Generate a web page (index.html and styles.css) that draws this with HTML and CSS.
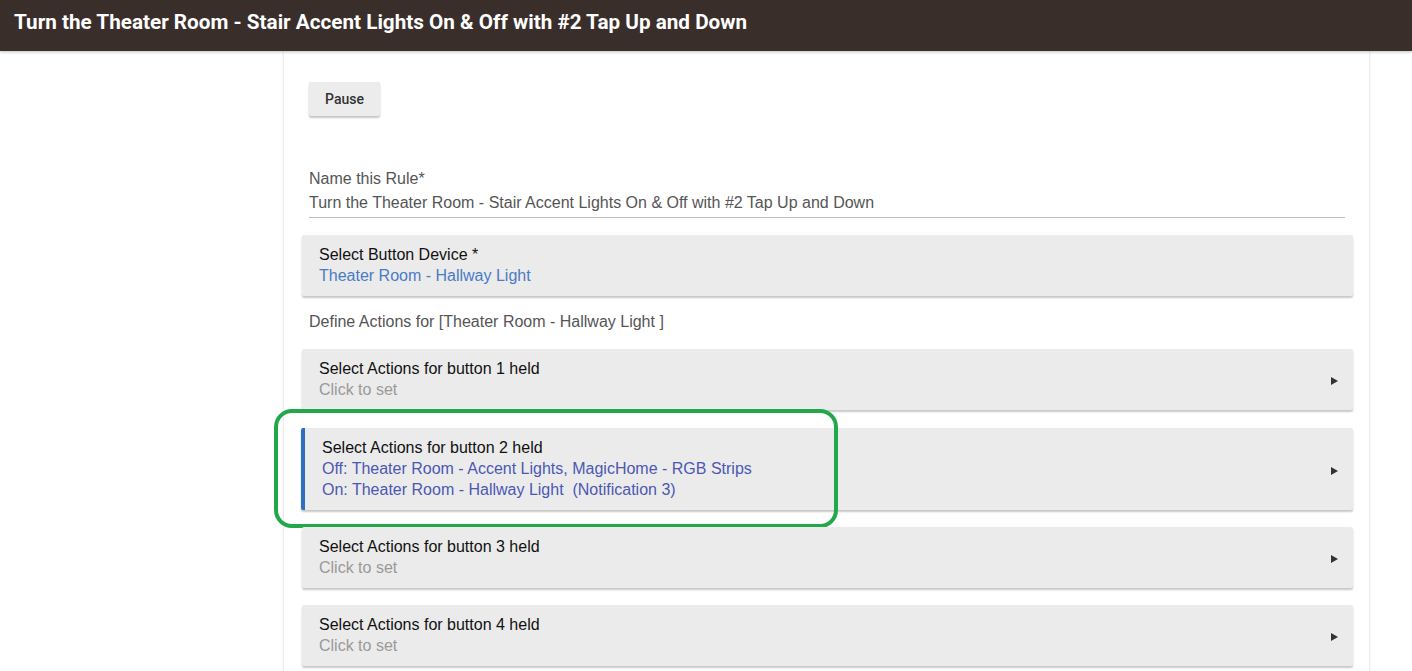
FILE: index.html
```html
<!DOCTYPE html>
<html lang="en">
  <head>
    <meta charset="UTF-8" />
    <meta name="viewport" content="width=device-width, initial-scale=1.0" />
    <link rel="stylesheet" href="styles.css">
    <title>Rule Machine</title>
  </head>
  <body>
    <header class="topbar">
      <h1>Turn the Theater Room - Stair Accent Lights On &amp; Off with #2 Tap Up and Down</h1>
    </header>

    <main class="panel">
      <div class="btn-row">
        <button class="btn">Pause</button>
      </div>

      <div class="field">
        <label class="field-label">Name this Rule*</label>
        <div class="field-value">Turn the Theater Room - Stair Accent Lights On &amp; Off with #2 Tap Up and Down</div>
      </div>

      <div class="card">
        <div class="card-text">
          <div class="card-title">Select Button Device *</div>
          <div class="card-sub device">Theater Room - Hallway Light</div>
        </div>
      </div>

      <p class="note">Define Actions for [Theater Room - Hallway Light ]</p>

      <div class="card">
        <div class="card-text">
          <div class="card-title">Select Actions for button 1 held</div>
          <div class="card-sub">Click to set</div>
        </div>
        <span class="arrow"></span>
      </div>

      <div class="card active">
        <div class="card-text">
          <div class="card-title">Select Actions for button 2 held</div>
          <div class="card-sub action">Off: Theater Room - Accent Lights, MagicHome - RGB Strips</div>
          <div class="card-sub action">On: Theater Room - Hallway Light &nbsp;(Notification 3)</div>
        </div>
        <span class="arrow"></span>
        <div class="highlight"></div>
      </div>

      <div class="card">
        <div class="card-text">
          <div class="card-title">Select Actions for button 3 held</div>
          <div class="card-sub">Click to set</div>
        </div>
        <span class="arrow"></span>
      </div>

      <div class="card">
        <div class="card-text">
          <div class="card-title">Select Actions for button 4 held</div>
          <div class="card-sub">Click to set</div>
        </div>
        <span class="arrow"></span>
      </div>
    </main>
  </body>
</html>
```

FILE: styles.css
```css
body {
  margin: 0;
  background: #fff;
  font-family: "Liberation Sans", Arial, sans-serif;
  font-size: 16px;
  overflow: hidden;
}
.topbar {
  height: 51px;
  background: #3a2e2b;
  display: flex;
  align-items: center;
  padding-left: 14px;
  box-shadow: 0 1px 3px rgba(0, 0, 0, 0.25);
  position: relative;
  z-index: 2;
}
.topbar h1 {
  margin: 0;
  color: #fff;
  font-family: Roboto, "Liberation Sans", sans-serif;
  font-weight: 700;
  font-size: 20.7px;
  margin-top: -7px;
}
.panel {
  margin-left: 284px;
  width: 1085px;
  box-sizing: border-box;
  padding: 31px 16px 20px 18px;
  box-shadow: 0 0 3px rgba(0, 0, 0, 0.18);
  min-height: 640px;
}
.btn-row {
  padding-left: 7px;
}
.btn {
  font-family: Roboto, "Liberation Sans", sans-serif;
  font-weight: 500;
  font-size: 14px;
  color: #333;
  background: #ececec;
  border: none;
  border-radius: 2px;
  width: 71px;
  height: 34px;
  box-shadow: 0 2px 2px rgba(0, 0, 0, 0.22), 0 0 1px rgba(0, 0, 0, 0.1);
  padding: 0;
}
.field {
  margin: 52px 8px 0 7px;
  border-bottom: 1px solid #bdbdbd;
  padding-bottom: 1px;
}
.field-label,
.field-value {
  display: block;
  color: #555;
}
.field-label {
  line-height: 22px;
}
.field-value {
  line-height: 26px;
}
.card {
  background: #ebebeb;
  border-radius: 2px;
  box-shadow: 0 2px 2px rgba(0, 0, 0, 0.22);
  padding: 9px 15px 10px 17px;
  margin-top: 17px;
  display: flex;
  align-items: center;
  position: relative;
}
.card-text {
  flex: 1;
}
.card-title {
  color: #111;
  line-height: 21px;
}
.card-sub {
  color: #999;
  line-height: 21px;
}
.card-sub.device {
  color: #4a7bc6;
}
.card-sub.action {
  color: #4b58b3;
}
.card.active {
  margin-left: -1px;
  border-left: 4px solid #2f6fc0;
  padding-left: 17px;
  margin-top: 18px;
}
.note {
  margin: 15px 8px 0 7px;
  color: #555;
  line-height: 21px;
}
.arrow {
  width: 0;
  height: 0;
  margin-top: 4px;
  border-top: 4px solid transparent;
  border-bottom: 4px solid transparent;
  border-left: 7px solid #333;
}
.highlight {
  position: absolute;
  left: -31px;
  top: -19px;
  width: 556px;
  height: 111px;
  border: 4px solid #22a84a;
  border-radius: 18px;
  pointer-events: none;
}
```
